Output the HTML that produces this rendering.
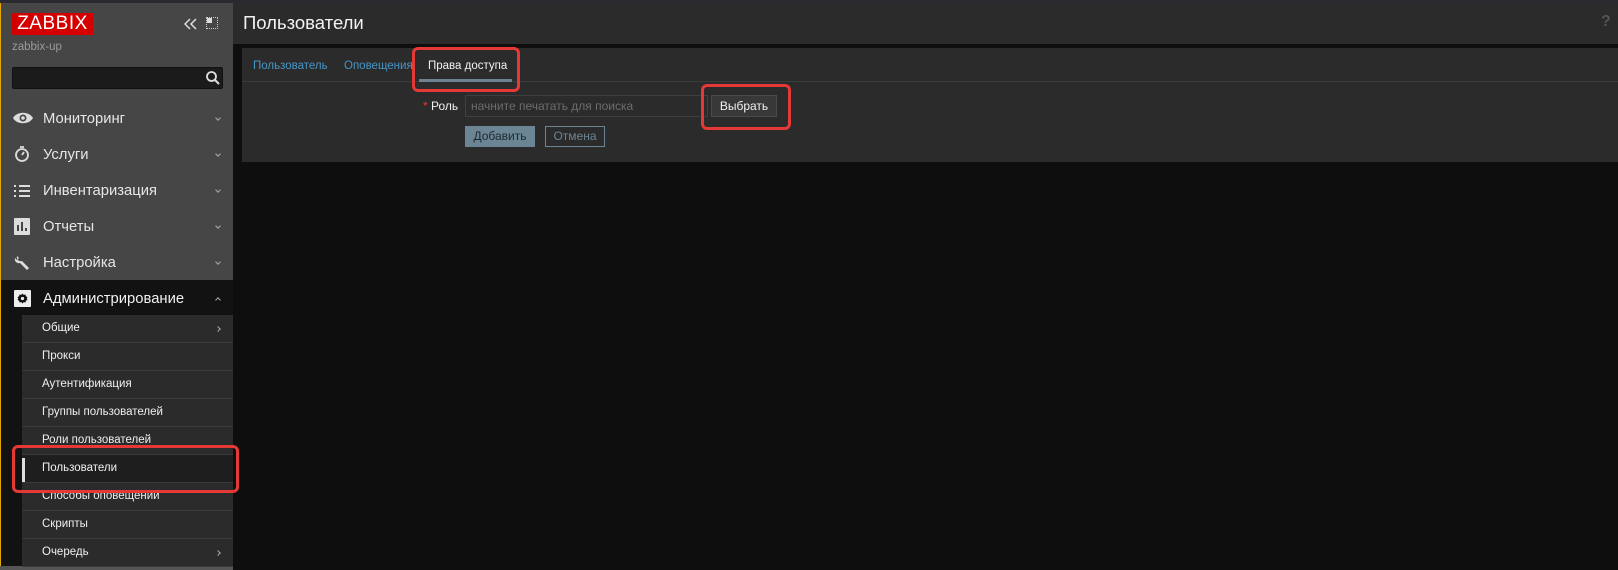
<!DOCTYPE html>
<html><head><meta charset="utf-8"><style>
*{margin:0;padding:0;box-sizing:border-box}
body{width:1618px;height:570px;overflow:hidden;background:#0e0e0e;font-family:"Liberation Sans",Arial,sans-serif;position:relative}
.a{position:absolute}
.side{left:0;top:0;width:233px;height:570px;background:#464646;border-left:1px solid #e0a800}
.top{left:0;top:0;width:1618px;height:3px;background:#2a2830}
.mi{position:absolute;left:43px;color:#e6e6e6;font-size:14.8px}
.chev{position:absolute;left:216px;width:4px;height:4px;border-right:1px solid #aaa;border-bottom:1px solid #aaa;transform:rotate(45deg)}
.sub{position:absolute;left:22px;width:211px;height:28px;background:#2b2b2b;border-bottom:1px solid #3a3a3a;color:#f0f0f0;font-size:11.5px;line-height:27px;padding-left:20px}
.red{position:absolute;border:3px solid #e53935;border-radius:6px}
</style></head><body>
<div class="a side"></div>
<div class="a top"></div>
<div class="a" style="left:12px;top:13px;width:81px;height:22px;background:#d40000;color:#fff;font-size:19px;line-height:22px;text-align:center;letter-spacing:0.5px">ZABBIX</div>
<svg class="a" style="left:184px;top:18px" width="14" height="12" viewBox="0 0 14 12"><path d="M6 1L1 6l5 5M12 1L7 6l5 5" stroke="#ddd" stroke-width="1.5" fill="none"/></svg>
<div class="a" style="left:206px;top:17px;width:12px;height:12px;border:1px dotted #ccc"></div>
<div class="a" style="left:207px;top:18px;width:5px;height:5px;background:#ddd"></div>
<div class="a" style="left:12px;top:41px;color:#9a9a9a;font-size:11.5px">zabbix-up</div>
<div class="a" style="left:12px;top:67px;width:211px;height:22px;background:#1b1b1b;border:1px solid #111;border-radius:2px"></div>
<svg class="a" style="left:205px;top:70px" width="16" height="16" viewBox="0 0 16 16"><circle cx="6.5" cy="6.5" r="4.5" stroke="#ddd" stroke-width="1.8" fill="none"/><path d="M10 10l4 4" stroke="#ddd" stroke-width="2"/></svg>

<svg class="a" style="left:12px;top:111px" width="22" height="14" viewBox="0 0 22 14"><path d="M1 7C5 0 17 0 21 7C17 14 5 14 1 7Z" fill="#ddd"/><circle cx="11" cy="7" r="3.5" fill="#464646"/><circle cx="11" cy="7" r="1.8" fill="#ddd"/></svg>
<svg class="a" style="left:14px;top:145px" width="16" height="18" viewBox="0 0 16 18"><circle cx="8" cy="10" r="6" stroke="#ddd" stroke-width="1.8" fill="none"/><path d="M6 2h4M8 10l2-3" stroke="#ddd" stroke-width="1.8"/></svg>
<svg class="a" style="left:13px;top:184px" width="18" height="14" viewBox="0 0 18 14"><path d="M1 2h2M6 2h11M1 7h2M6 7h11M1 12h2M6 12h11" stroke="#ddd" stroke-width="2"/></svg>
<svg class="a" style="left:14px;top:218px" width="16" height="17" viewBox="0 0 16 17"><rect width="16" height="17" rx="1" fill="#ddd"/><path d="M4 13V7M8 13V4M12 13v-3" stroke="#464646" stroke-width="2"/></svg>
<svg class="a" style="left:14px;top:254px" width="17" height="17" viewBox="0 0 17 17"><path d="M3 2a4 4 0 0 0 5 5l7 7-2 2-7-7a4 4 0 0 1-5-5l2 2 2-2z" fill="#ddd"/></svg>
<div class="mi" style="top:111px">Мониторинг</div><div class="chev" style="top:116px"></div>
<div class="mi" style="top:147px">Услуги</div><div class="chev" style="top:152px"></div>
<div class="mi" style="top:183px">Инвентаризация</div><div class="chev" style="top:188px"></div>
<div class="mi" style="top:219px">Отчеты</div><div class="chev" style="top:224px"></div>
<div class="mi" style="top:255px">Настройка</div><div class="chev" style="top:260px"></div>

<div class="a" style="left:1px;top:280px;width:232px;height:286px;background:#121212"></div>
<div class="a" style="left:0;top:566px;width:233px;height:4px;background:#555"></div>
<svg class="a" style="left:14px;top:290px" width="17" height="17" viewBox="0 0 17 17"><rect width="17" height="17" rx="1" fill="#eee"/><path d="M8.5 3.5l1.2 1.4 1.8-.4.4 1.8 1.6.8-.8 1.4.8 1.4-1.6.8-.4 1.8-1.8-.4-1.2 1.4-1.2-1.4-1.8.4-.4-1.8-1.6-.8.8-1.4-.8-1.4 1.6-.8.4-1.8 1.8.4z" fill="#121212"/><circle cx="8.5" cy="8.5" r="1.6" fill="#eee"/></svg>
<div class="mi" style="top:291px;color:#f0f0f0">Администрирование</div>
<div class="chev" style="top:298px;transform:rotate(225deg)"></div>

<div class="sub" style="top:315px">Общие</div>
<div class="sub" style="top:343px">Прокси</div>
<div class="sub" style="top:371px">Аутентификация</div>
<div class="sub" style="top:399px">Группы пользователей</div>
<div class="sub" style="top:427px">Роли пользователей</div>
<div class="sub" style="top:455px;background:#1e1e1e">Пользователи</div>
<div class="a" style="left:22px;top:458px;width:3px;height:24px;background:#ddd"></div>
<div class="sub" style="top:483px">Способы оповещений</div>
<div class="sub" style="top:511px">Скрипты</div>
<div class="sub" style="top:539px">Очередь</div>
<div class="chev" style="top:327px;transform:rotate(-45deg)"></div>
<div class="chev" style="top:551px;transform:rotate(-45deg)"></div>
<div class="red" style="left:12px;top:445px;width:227px;height:48px"></div>

<div class="a" style="left:233px;top:3px;width:1385px;height:41px;background:#2b2b2b"></div>
<div class="a" style="left:243px;top:12px;color:#f2f2f2;font-size:18.5px">Пользователи</div>
<div class="a" style="left:1601px;top:13px;color:#555;font-size:16px;font-weight:bold">?</div>
<div class="a" style="left:242px;top:48px;width:1376px;height:114px;background:#2b2b2b"></div>
<div class="a" style="left:242px;top:81px;width:1376px;height:1px;background:#3b3b3b"></div>
<div class="a" style="left:253px;top:60px;color:#4796c4;font-size:11.5px">Пользователь</div>
<div class="a" style="left:344px;top:60px;color:#4796c4;font-size:11.5px">Оповещения</div>
<div class="a" style="left:428px;top:60px;color:#f2f2f2;font-size:11.5px">Права доступа</div>
<div class="a" style="left:419px;top:79px;width:93px;height:3px;background:#6d8391"></div>
<div class="red" style="left:412px;top:47px;width:108px;height:45px"></div>
<div class="a" style="left:423px;top:99px;color:#e33;font-size:12px">*</div>
<div class="a" style="left:431px;top:99px;color:#f2f2f2;font-size:12px">Роль</div>
<div class="a" style="left:465px;top:95px;width:243px;height:22px;background:#2b2b2b;border:1px solid #3f3f3f;color:#6d6d6d;font-size:12px;line-height:20px;padding-left:5px">начните печатать для поиска</div>
<div class="a" style="left:711px;top:95px;width:66px;height:22px;background:#383838;border:1px solid #4a4a4a;color:#f2f2f2;font-size:12px;line-height:20px;text-align:center">Выбрать</div>
<div class="red" style="left:701px;top:84px;width:90px;height:46px"></div>
<div class="a" style="left:465px;top:126px;width:70px;height:21px;background:#6b8594;color:#1e2a30;font-size:12px;line-height:21px;text-align:center">Добавить</div>
<div class="a" style="left:545px;top:126px;width:60px;height:21px;border:1px solid #6b8594;color:#6b8594;font-size:12px;line-height:19px;text-align:center">Отмена</div>
</body></html>
